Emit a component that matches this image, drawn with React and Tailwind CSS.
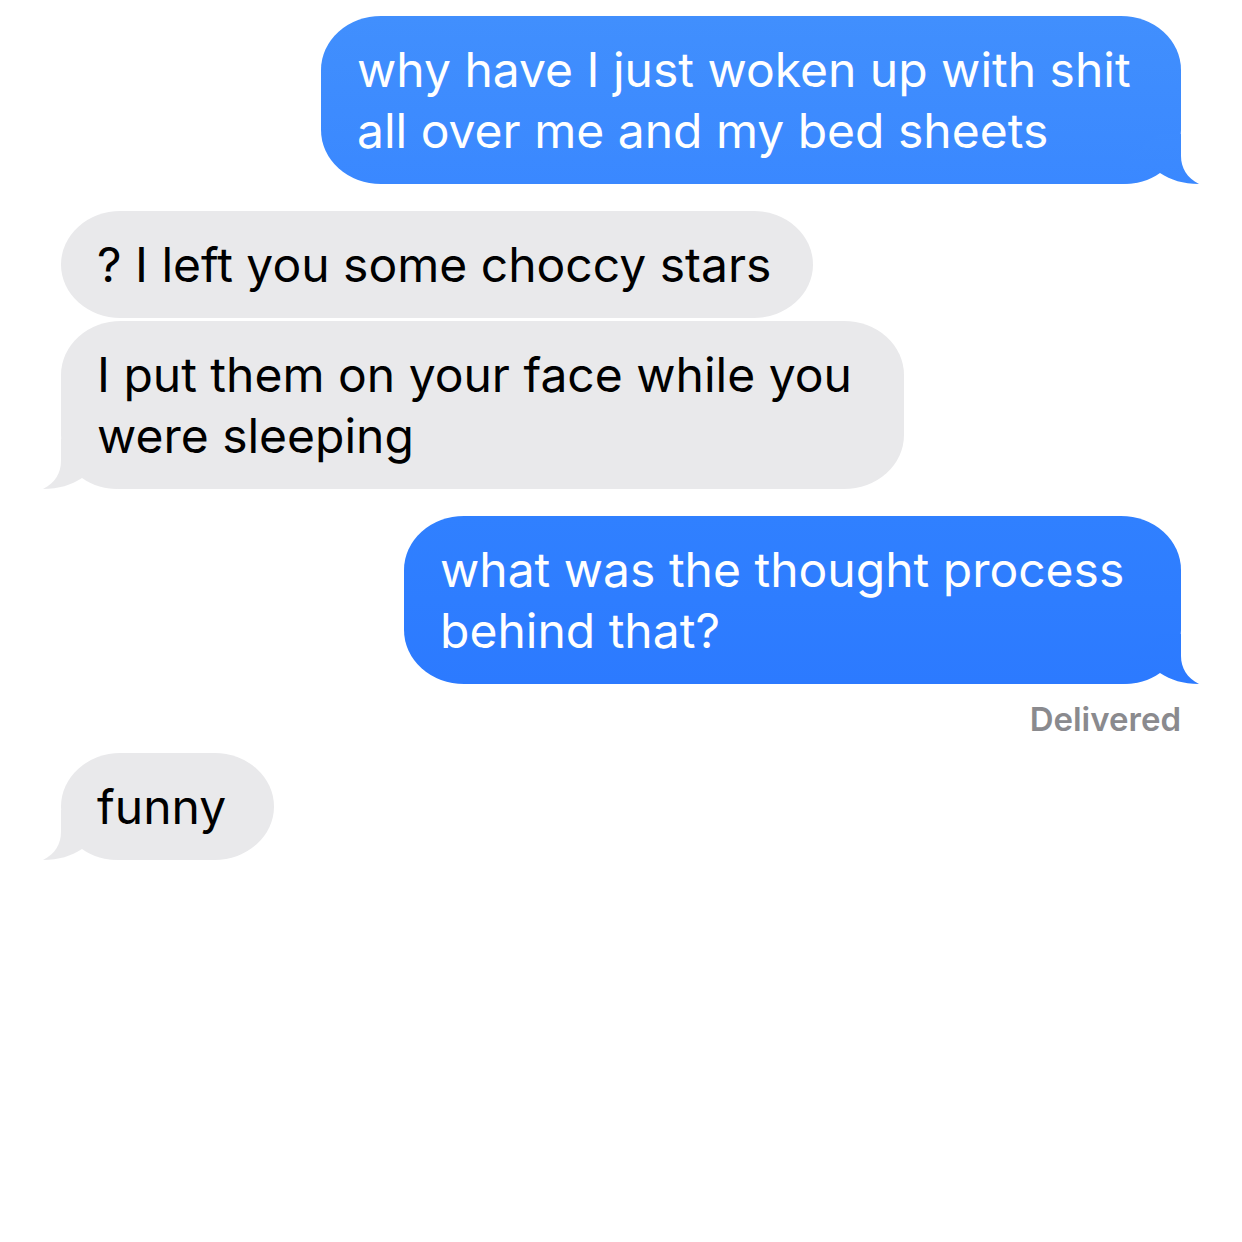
const messages = [
  { id: 1, from: 'me', width: 'max-w-[860px]', fill: 'bg-linear-to-b from-[#418ffd] to-[#3a88ff]', tail: ['#3d8bfe', '#3a88ff'], gap: '', lines: ['why have I just woken up with shit', 'all over me and my bed sheets'] },
  { id: 2, from: 'them', width: 'max-w-[752px]', fill: 'bg-[#e9e9eb]', gap: 'mt-[27px]', lines: ['? I left you some choccy stars'] },
  { id: 3, from: 'them', width: 'max-w-[843px]', fill: 'bg-[#e9e9eb]', tail: ['#e9e9eb', '#e9e9eb'], gap: 'mt-[3px]', lines: ['I put them on your face while you', 'were sleeping'] },
  { id: 4, from: 'me', width: 'max-w-[777px]', fill: 'bg-linear-to-b from-[#3080ff] to-[#2c7aff]', tail: ['#2d7cff', '#2c7aff'], gap: 'mt-[27px]', status: 'Delivered', lines: ['what was the thought process', 'behind that?'] },
  { id: 5, from: 'them', width: 'max-w-[213px]', fill: 'bg-[#e9e9eb]', tail: ['#e9e9eb', '#e9e9eb'], gap: 'mt-3.5', lines: ['funny'] },
];

function Tail({ id, mine, colors }) {
  return (
    <svg viewBox="0 0 80 60" aria-hidden="true"
      className={`absolute bottom-0 h-[60px] w-[80px] ${mine ? '-right-[18px]' : '-left-[18px] -scale-x-100'}`}>
      <defs>
        <linearGradient id={id} gradientUnits="userSpaceOnUse" x1="0" y1="0" x2="0" y2="60">
          <stop offset="0" stopColor={colors[0]} />
          <stop offset="1" stopColor={colors[1]} />
        </linearGradient>
      </defs>
      <path d="M40 10H62V32C62 44 68 54 80 60C64 60 52 56 41 49C30 57 18 60 2 60V40Z" fill={`url(#${id})`} />
    </svg>
  );
}

function Message({ message }) {
  const mine = message.from === 'me';

  return (
    <li className={`flex flex-col ${mine ? 'items-end' : 'items-start'} ${message.gap}`}>
      <div className={`relative w-full rounded-[60px/54px] px-9 py-[23px] ${message.width} ${message.fill} ${mine ? 'text-white' : 'text-black'}`}>
        {message.tail && <Tail id={`tail-${message.id}`} mine={mine} colors={message.tail} />}
        <p className="relative text-[48px] leading-[61px] whitespace-nowrap">
          {message.lines.map((line) => (
            <span key={line} className="block">{line}</span>
          ))}
        </p>
      </div>
      {message.status && (
        <p className="mt-[15px] text-[33px] leading-10 font-semibold text-[#8a8a8e]">{message.status}</p>
      )}
    </li>
  );
}

export default function App() {
  return (
    <main className="min-h-screen bg-white px-[61px] pt-4 pb-8 font-['Inter',sans-serif]">
      <ul>
        {messages.map((message) => (
          <Message key={message.id} message={message} />
        ))}
      </ul>
    </main>
  );
}
